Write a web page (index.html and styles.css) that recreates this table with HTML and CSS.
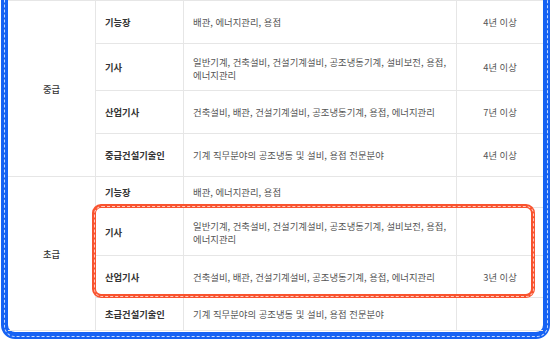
FILE: index.html
```html
<!DOCTYPE html>
<html lang="ko">
<head>
<meta charset="utf-8">
<link rel="stylesheet" href="styles.css">
</head>
<body>
<div class="frame">
  <div class="frame-dash"></div>
  <div class="grid">
    <div class="c1 sec">중급</div>
    <div class="c2 h43">기능장</div>
    <div class="c3">배관, 에너지관리, 용접</div>
    <div class="c4">4년 이상</div>

    <div class="c2">기사</div>
    <div class="c3 multi"><span>일반기계, 건축설비, 건설기계설비, 공조냉동기계, 설비보전, 용접,</span><span>에너지관리</span></div>
    <div class="c4">4년 이상</div>

    <div class="c2">산업기사</div>
    <div class="c3">건축설비, 배관, 건설기계설비, 공조냉동기계, 용접, 에너지관리</div>
    <div class="c4">7년 이상</div>

    <div class="c2">중급건설기술인</div>
    <div class="c3">기계 직무분야의 공조냉동 및 설비, 용접 전문분야</div>
    <div class="c4">4년 이상</div>

    <div class="c1 sec last">초급</div>
    <div class="c2">기능장</div>
    <div class="c3">배관, 에너지관리, 용접</div>
    <div class="c4"></div>

    <div class="c2">기사</div>
    <div class="c3 multi"><span>일반기계, 건축설비, 건설기계설비, 공조냉동기계, 설비보전, 용접,</span><span>에너지관리</span></div>
    <div class="c4"></div>

    <div class="c2">산업기사</div>
    <div class="c3">건축설비, 배관, 건설기계설비, 공조냉동기계, 용접, 에너지관리</div>
    <div class="c4">3년 이상</div>

    <div class="c2 last">초급건설기술인</div>
    <div class="c3 last">기계 직무분야의 공조냉동 및 설비, 용접 전문분야</div>
    <div class="c4 last"></div>
  </div>
  <div class="highlight"><div class="highlight-dash"></div></div>
</div>
</body>
</html>
```
FILE: styles.css
```css
html, body {
  margin: 0;
  padding: 0;
  background: #ffffff;
  overflow: hidden;
}
body {
  font-family: "Noto Sans CJK KR", "Noto Sans", sans-serif;
  font-size: 9.3px;
  color: #555555;
}
.frame {
  position: relative;
  margin: -30px 3px 0 1px;
  padding: 23px 0 1px;
  border: 7px solid #1662f3;
  border-radius: 14px;
  background: #ffffff;
}
.frame-dash {
  position: absolute;
  inset: -4.5px;
  border: 1.5px dashed rgba(255, 255, 255, 0.75);
  border-radius: 11px;
  pointer-events: none;
}
.grid {
  display: grid;
  grid-template-columns: 87px 88px 273px 87px;
  grid-template-rows: 43px 47px 43px 43px 31px 48px 42px 34px;
}
.grid > div {
  box-sizing: border-box;
  border-top: 1px solid #e6e6e6;
  display: flex;
  align-items: center;
  white-space: nowrap;
}
.c1 {
  grid-column: 1;
  grid-row: span 4;
  justify-content: center;
  color: #333333;
  font-weight: 500;
}
.c2 {
  grid-column: 2;
  border-left: 1px solid #e6e6e6;
  padding-left: 9px;
  color: #333333;
  font-weight: 700;
}
.c3 {
  grid-column: 3;
  border-left: 1px solid #e6e6e6;
  padding-left: 9px;
  font-size: 9.4px;
}
.c4 {
  grid-column: 4;
  border-left: 1px solid #e6e6e6;
  justify-content: center;
}
.multi {
  flex-direction: column;
  align-items: flex-start !important;
  justify-content: center;
  line-height: 13px;
  padding-top: 3px;
}
.grid > .last {
  border-bottom: 1px solid #e6e6e6;
}
.highlight {
  position: absolute;
  left: 84px;
  top: 227px;
  width: 443px;
  height: 94px;
  box-sizing: border-box;
  border: 4px solid #f9532f;
  border-radius: 9px;
  pointer-events: none;
}
.highlight-dash {
  position: absolute;
  inset: -2.5px;
  border: 1px dashed rgba(255, 255, 255, 0.7);
  border-radius: 8px;
}
```
